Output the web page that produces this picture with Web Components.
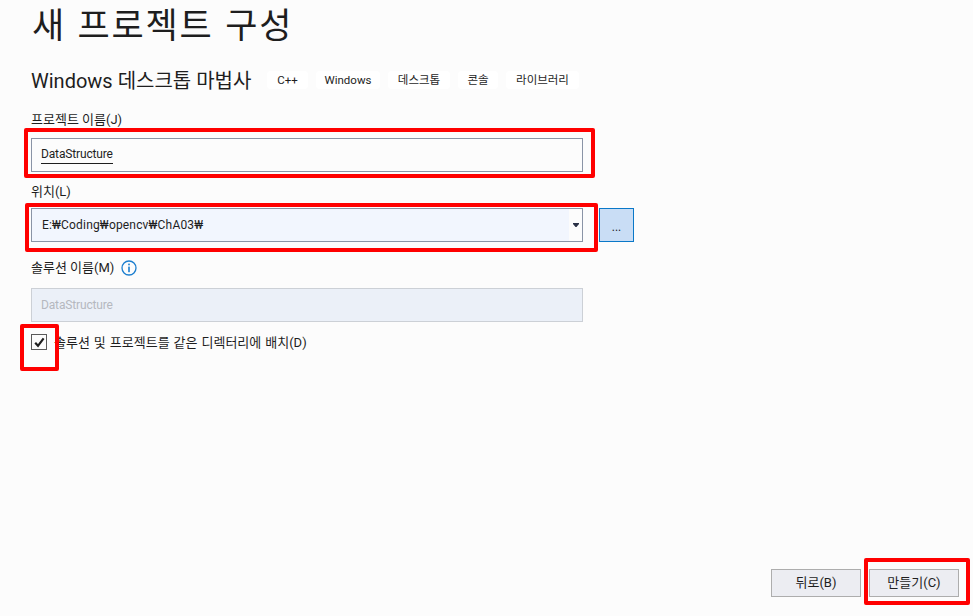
<!DOCTYPE html>
<html lang="ko">
<head>
<meta charset="utf-8">
<title>새 프로젝트 구성</title>
<style>
  html, body { margin: 0; height: 100%; overflow: hidden; background: #fcfcfc; }
  body { font: 13px Roboto, "Noto Sans CJK KR", sans-serif; color: #1e1e1e; }
</style>
</head>
<body>
<wizard-page>
  <h-title slot="title">새 프로젝트 구성</h-title>
  <wizard-sub slot="sub" name="Windows 데스크톱 마법사">
    <tag-chip>C++</tag-chip>
    <tag-chip style="--w:64px">Windows</tag-chip>
    <tag-chip style="--w:62px">데스크톱</tag-chip>
    <tag-chip style="--w:40px">콘솔</tag-chip>
    <tag-chip style="--w:73px">라이브러리</tag-chip>
  </wizard-sub>

  <text-field label="프로젝트 이름(J)" value="DataStructure" underline mark top="19" gap="9"></text-field>
  <combo-field label="위치(L)" value="E:₩Coding₩opencv₩ChA03₩"></combo-field>
  <text-field label="솔루션 이름(M)" value="DataStructure" info disabled top="17" gap="11"></text-field>
  <check-row>솔루션 및 프로젝트를 같은 디렉터리에 배치(D)</check-row>

  <wizard-footer slot="footer"></wizard-footer>
</wizard-page>

<script>
(() => {

  const KR = `"Noto Sans CJK KR", sans-serif`;
  const MIX = `Roboto, "Noto Sans CJK KR", sans-serif`;

  const define = (name, html) => {
    customElements.define(name, class extends HTMLElement {
      connectedCallback() {
        const shadow = this.attachShadow({ mode: "open" });
        shadow.innerHTML = typeof html === "function" ? html(this) : html;
      }
    });
  };

  define("wizard-page", `
    <style>
      :host { display: flex; flex-direction: column; height: 616px; box-sizing: border-box; padding-left: 31px; }
      .grow { flex: 1; }
    </style>
    <slot name="title"></slot>
    <slot name="sub"></slot>
    <slot></slot>
    <div class="grow"></div>
    <slot name="footer"></slot>
  `);

  define("h-title", `
    <style>
      :host { display: block; height: 46px; padding-left: 1px; font: 35px/46px ${KR}; letter-spacing: 1.8px; color: #1e1e1e; }
    </style>
    <slot></slot>
  `);

  define("wizard-sub", el => `
    <style>
      :host { display: flex; align-items: center; height: 24px; margin-top: 22px; }
      .name { font: 20px/24px ${MIX}; padding-top: 2px; width: 236px; white-space: nowrap; color: #1e1e1e; }
      .chips { display: flex; gap: 8px; }
    </style>
    <div class="name">${el.getAttribute("name")}</div>
    <div class="chips"><slot></slot></div>
  `);

  define("tag-chip", `
    <style>
      :host { display: flex; align-items: center; justify-content: center; width: var(--w, 41px); height: 18px;
        background: #fff; border-radius: 4px; font: 11.5px/18px ${MIX}; color: #1e1e1e; }
    </style>
    <slot></slot>
  `);

  const markStyle = `
    .mark { position: absolute; pointer-events: none; border: 4.5px solid #ff0000; border-radius: 2px; box-sizing: border-box; }
  `;

  define("text-field", el => {
    const off = el.hasAttribute("disabled");
    return `
    <style>
      :host { display: block; margin-top: ${el.getAttribute("top")}px; width: 552px; }
      .label { display: flex; align-items: center; gap: 7px; height: 18px; margin-bottom: ${el.getAttribute("gap")}px; font: 13px/20px ${MIX}; color: #1e1e1e; }
      .box { position: relative; display: flex; align-items: center; height: 34px; box-sizing: border-box; padding-left: 9px;
        background: ${off ? "#ebf0f8" : "#fcfcfc"};
        border: 1px solid ${off ? "#ccd0d6" : "#8a94a6"};
        font: 12px/20px ${MIX}; letter-spacing: -.15px; color: ${off ? "#b5b8bf" : "#1e1e1e"}; }
      .val { ${el.hasAttribute("underline") ? "border-bottom: 1px solid #1e1e1e; line-height: 17px;" : ""} }
      ${markStyle}
      .mark { inset: -11px -13px -7px -8px; }
      svg { display: block; }
    </style>
    <div class="label">${el.getAttribute("label")}${el.hasAttribute("info") ? `
      <svg width="16" height="16" viewBox="0 0 16 16">
        <circle cx="8" cy="8" r="7" fill="none" stroke="#1b7ecf" stroke-width="1.3"/>
        <rect x="7.2" y="3.6" width="1.6" height="1.7" fill="#1b7ecf"/>
        <rect x="7.2" y="6.6" width="1.6" height="5.6" fill="#1b7ecf"/>
      </svg>` : ""}</div>
    <div class="box"><span class="val">${el.getAttribute("value")}</span>
      ${el.hasAttribute("mark") ? `<div class="mark"></div>` : ""}</div>
  `;
  });

  define("combo-field", el => `
    <style>
      :host { display: block; margin-top: 10px; }
      .label { height: 18px; margin-bottom: 8px; font: 13px/20px ${MIX}; color: #1e1e1e; }
      .row { display: flex; gap: 16px; }
      .box { position: relative; display: flex; width: 552px; height: 34px; box-sizing: border-box;
        background: #fcfcfc; border: 1px solid #8a94a6; font: 12px/32px ${MIX}; color: #1e1e1e; }
      .val { flex: 1; padding-left: 10px; background: #f2f6fe; letter-spacing: .17px; }
      .drop { display: flex; align-items: center; justify-content: center; width: 13px; }
      .btn { width: 35px; height: 34px; box-sizing: border-box; background: #c9ddf5; border: 1px solid #0a78c8;
        text-align: center; font: 12px/36px ${MIX}; color: #1e1e1e; }
      ${markStyle}
      .mark { inset: -6px -16px -11px -7px; }
    </style>
    <div class="label">${el.getAttribute("label")}</div>
    <div class="row">
      <div class="box">
        <div class="val">${el.getAttribute("value")}</div>
        <div class="drop"><svg width="6" height="4" viewBox="0 0 6 4"><path d="M0 0H6V1L3.5 4H2.5L0 1Z" fill="#2a3146"/></svg></div>
        <div class="mark"></div>
      </div>
      <div class="btn">...</div>
    </div>
  `);

  define("check-row", `
    <style>
      :host { display: flex; align-items: center; gap: 7px; position: relative; height: 16px; margin-top: 12px; font: 13px/21px ${MIX}; word-spacing: .75px; color: #1e1e1e; }
      .cb { position: relative; width: 16px; height: 16px; box-sizing: border-box; border: 1px solid #5a5a5a; background: #fcfcfc; }
      svg { display: block; position: absolute; left: 2px; top: 2px; }
      ${markStyle}
      .mark { left: -12px; top: -11px; width: 39px; height: 47px; }
    </style>
    <div class="cb">
      <svg width="11" height="11" viewBox="0 0 11 11"><path d="M1.2 5.8 L4 8.8 L9.6 1.4" fill="none" stroke="#1e1e1e" stroke-width="2.2"/></svg>
      <div class="mark"></div>
    </div>
    <slot></slot>
  `);

  define("wizard-footer", `
    <style>
      :host { display: flex; justify-content: flex-end; gap: 8px; padding: 0 14px 19px 0; }
      .btn { position: relative; width: 90px; height: 28px; box-sizing: border-box; background: #ecedf2; border: 1px solid #adadad;
        text-align: center; font: 13px/26px ${MIX}; color: #1e1e1e; }
      ${markStyle}
      .mark { left: -6px; top: -12px; width: 106px; height: 47px; }
    </style>
    <div class="btn">뒤로(B)</div>
    <div class="btn">만들기(C)<div class="mark"></div></div>
  `);

})();
</script>
</body>
</html>
